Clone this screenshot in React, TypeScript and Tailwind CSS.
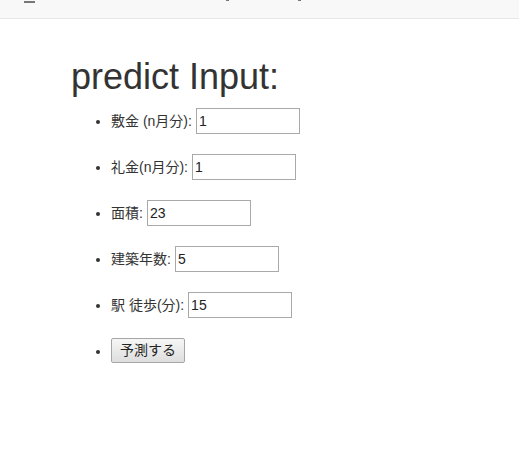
import React from "react";

const rows: { label: string; value: string }[] = [
  { label: "敷金 (n月分):", value: "1" },
  { label: "礼金(n月分):", value: "1" },
  { label: "面積:", value: "23" },
  { label: "建築年数:", value: "5" },
  { label: "駅 徒歩(分):", value: "15" },
];

export default function App() {
  return (
    <div
      className="min-h-[475px] bg-white text-[#333]"
      style={{ fontFamily: '"Liberation Sans", Arial, "Noto Sans CJK JP", sans-serif' }}
    >
      <div className="flex items-start h-[19px] pl-[24px] bg-[#f8f8f8] border-b border-[#e7e7e7]">
        <div className="mt-[1px] w-[11px] h-[2px] bg-[#777]" />
        <div className="ml-[191px] w-[3px] h-[1px] bg-[#777]" />
        <div className="ml-[69px] w-[3px] h-[1px] bg-[#777]" />
      </div>
      <div className="pl-[71px]">
        <h1 className="mt-[38px] mb-[11px] text-[36px] leading-[39.6px] font-normal">
          predict Input:
        </h1>
        <ul className="list-disc pl-[40px] text-[14px] flex flex-col gap-[20px]">
          {rows.map((r) => (
            <li key={r.label} className="list-item h-[26px] leading-[26px]">
              <div className="inline-flex items-center gap-[4px] h-[26px] align-top">
                <label>{r.label}</label>
                <input
                  type="text"
                  defaultValue={r.value}
                  className="w-[104px] h-[26px] border border-[#a9a9a9] px-[2px] py-[1px] text-[14px] text-[#222] outline-none"
                />
              </div>
            </li>
          ))}
          <li className="list-item h-[26px] leading-[26px]">
            <div className="inline-flex items-center h-[26px] align-top">
              <button className="h-[25px] px-[8px] border border-[#a6a6a6] rounded-[2px] bg-gradient-to-b from-[#f6f6f6] to-[#dedede] text-[14px] text-[#222] leading-[23px]">
                予測する
              </button>
            </div>
          </li>
        </ul>
      </div>
    </div>
  );
}
